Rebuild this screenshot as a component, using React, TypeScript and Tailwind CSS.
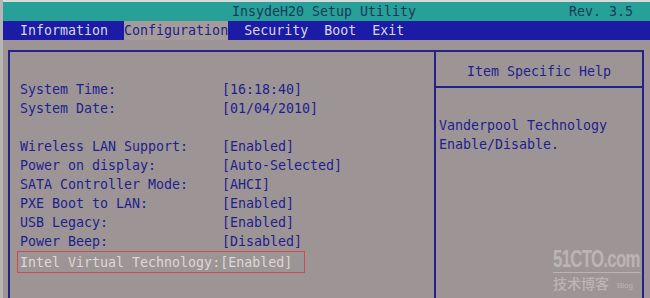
import React from "react";

const rows: [string, string][] = [
  ["System Time:", "[16:18:40]"],
  ["System Date:", "[01/04/2010]"],
  ["", ""],
  ["Wireless LAN Support:", "[Enabled]"],
  ["Power on display:", "[Auto-Selected]"],
  ["SATA Controller Mode:", "[AHCI]"],
  ["PXE Boot to LAN:", "[Enabled]"],
  ["USB Legacy:", "[Enabled]"],
  ["Power Beep:", "[Disabled]"],
];

const menu = ["Information", "Configuration", "Security", "Boot", "Exit"];

export default function App() {
  return (
    <div
      className="relative w-[650px] h-[298px] overflow-hidden bg-[#9d9595] border-l-[3px] border-[#b7b4b4] text-[13.3px] leading-[19px] font-medium text-[#1e1e8e]"
      style={{ fontFamily: '"DejaVu Sans Mono", "Liberation Mono", monospace' }}
    >
      {/* title bar */}
      <div className="h-[2px] bg-[#d6dad8]" />
      <div className="relative h-[19px] bg-[#27a198] text-[#173a5c]">
        <div className="absolute left-[229px] top-0">InsydeH20 Setup Utility</div>
        <div className="absolute left-[566px] top-0 whitespace-pre">Rev. 3.5</div>
      </div>

      {/* menu */}
      <div className="flex h-[19px] bg-[#1b1ba6] pl-[1px] text-[#d8d8e8]">
        {menu.map((m, i) => (
          <div
            key={m}
            className={
              i === 1
                ? "bg-[#a49c9b] text-[#1e1e8e] mx-[16px]"
                : i === 0
                ? "pl-[16px]"
                : "mr-[16px]"
            }
          >
            {m}
          </div>
        ))}
      </div>

      {/* panels */}
      <div className="ml-[5px] mt-[10px] flex w-[636px] h-[260px] border-t-2 border-l-2 border-r-2 border-[#22228a]">
        <div className="w-[426px] border-r-2 border-[#22228a] pl-[10px] pt-[28px]">
          {rows.map(([l, v], i) => (
            <div key={i} className="flex h-[19px] whitespace-pre">
              <span className="w-[202px]">{l}</span>
              <span>{v}</span>
            </div>
          ))}
          <div className="ml-[-3px] flex h-[22px] w-[288px] items-center border border-[#d04a4a] pl-[2px] text-[#dcd8d8] whitespace-pre">
            Intel Virtual Technology:[Enabled]
          </div>
        </div>
        <div className="flex-1">
          <div className="h-[36px] border-b-2 border-[#22228a] pt-[10px] text-center">
            Item Specific Help
          </div>
          <div className="pl-[3px] pt-[28px]">
            <div>Vanderpool Technology</div>
            <div>Enable/Disable.</div>
          </div>
        </div>
      </div>

      {/* watermark */}
      <div className="absolute left-[550px] top-[247px] text-[#bab5b5] leading-none">
        <div
          className="origin-left scale-x-[0.7] text-[24px] font-bold tracking-[-1px] w-[125px] border-b border-[#bab5b5] pb-[1px]"
          style={{ fontFamily: '"Liberation Sans", sans-serif' }}
        >
          51CTO.com
        </div>
        <div className="flex items-end gap-[8px] mt-[3px]">
          <span
            className="text-[14px]"
            style={{ fontFamily: '"Noto Sans CJK SC", sans-serif' }}
          >
            技术博客
          </span>
          <span className="text-[8px]" style={{ fontFamily: '"Liberation Sans", sans-serif' }}>
            Blog
          </span>
        </div>
      </div>
    </div>
  );
}
